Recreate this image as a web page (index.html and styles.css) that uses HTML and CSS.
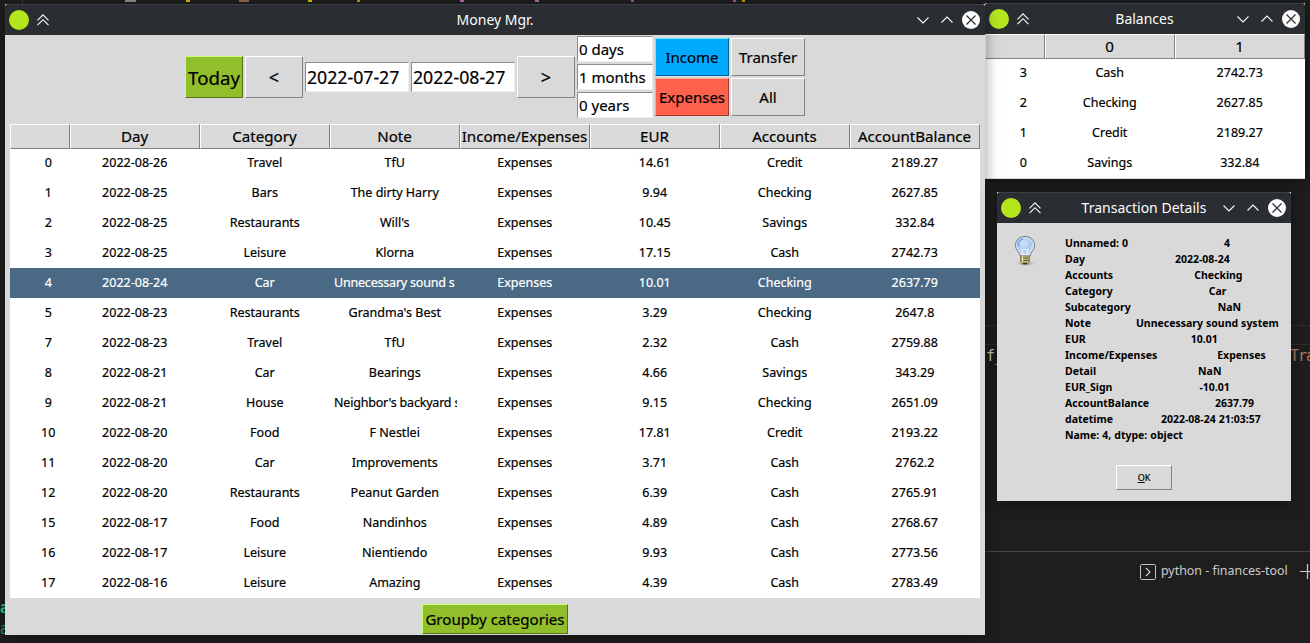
FILE: index.html
```html
<!DOCTYPE html>
<html lang="en">
<head>
<meta charset="utf-8">
<title>Money Mgr.</title>
<link rel="stylesheet" href="styles.css">
</head>
<body>
<svg class="defs" width="0" height="0">
  <symbol id="up2" viewBox="0 0 12 12"><path d="M.5 6.3 6 .8l5.500 5.500M.5 11.200 6 5.700l5.500 5.500" fill="none" stroke="#fcfcfc" stroke-width="1.100"/></symbol>
  <symbol id="down" viewBox="0 0 12 12"><path d="M.5 3.500 6 9l5.500-5.500" fill="none" stroke="#fcfcfc" stroke-width="1.100"/></symbol>
  <symbol id="up" viewBox="0 0 12 12"><path d="M.5 8.500 6 3l5.500 5.500" fill="none" stroke="#fcfcfc" stroke-width="1.100"/></symbol>
  <symbol id="close" viewBox="0 0 18 18"><circle cx="9" cy="9" r="9" fill="#fcfcfc"/><path d="M4.500 4.500l9 9m0-9l-9 9" stroke="#2a2e32" stroke-width="1.200"/></symbol>
</svg>
<div class="desktop">
  <i class="frag guide"></i>
  <i class="frag mark m1"></i><i class="frag mark m2"></i><i class="frag mark m3"></i><i class="frag mark m4"></i><i class="frag mark m5"></i><i class="frag mark m6"></i><i class="frag mark m7"></i><i class="frag mark m8"></i><i class="frag mark m9"></i>
  <i class="frag line l1"></i><i class="frag line l2"></i><i class="frag line l3"></i>
  <span class="frag code c1">f_</span><span class="frag code c2">Tra</span>
  <span class="frag code c3">a</span><span class="frag code c4">a</span>
  <div class="frag terminal">
    <svg width="16" height="16" viewBox="0 0 16 16"><rect x=".5" y=".5" width="15" height="15" rx="1" fill="none" stroke="#c0c4c8"/><path d="M6 4l4 4-4 4" fill="none" stroke="#ccc" stroke-width="1.200"/></svg>
    <span>python - finances-tool</span>
    <svg class="plus" width="15" height="15" viewBox="0 0 15 15"><path d="M0 7.500h15M7.500 0v15" stroke="#ccc" stroke-width="1.200"/></svg>
  </div>

  <section class="window balances">
    <header class="bar"><i class="dot"></i><svg class="ic"><use href="#up2"/></svg><h1>Balances</h1><svg class="ic"><use href="#down"/></svg><svg class="ic"><use href="#up"/></svg><svg class="x"><use href="#close"/></svg></header>
    <div class="table small">
      <div class="row head"><b></b><b>0</b><b>1</b></div>
      <div class="row"><span>3</span><span>Cash</span><span>2742.73</span></div>
      <div class="row"><span>2</span><span>Checking</span><span>2627.85</span></div>
      <div class="row"><span>1</span><span>Credit</span><span>2189.27</span></div>
      <div class="row"><span>0</span><span>Savings</span><span>332.84</span></div>
    </div>
  </section>

  <section class="window main">
    <header class="bar"><i class="dot"></i><svg class="ic"><use href="#up2"/></svg><h1>Money Mgr.</h1><svg class="ic"><use href="#down"/></svg><svg class="ic"><use href="#up"/></svg><svg class="x"><use href="#close"/></svg></header>
    <div class="controls">
      <button class="btn tall green today">Today</button>
      <button class="btn tall">&lt;</button>
      <div class="entry date">2022-07-27</div>
      <div class="entry date">2022-08-27</div>
      <button class="btn tall">&gt;</button>
      <div class="stack"><div class="entry">0 days</div><div class="entry">1 months</div><div class="entry">0 years</div></div>
      <div class="filters"><button class="btn blue">Income</button><button class="btn">Transfer</button><button class="btn red">Expenses</button><button class="btn">All</button></div>
    </div>
    <div class="table big">
      <div class="row head"><b></b><b>Day</b><b>Category</b><b>Note</b><b>Income/Expenses</b><b>EUR</b><b>Accounts</b><b>AccountBalance</b></div>
      <div class="row"><span>0</span><span>2022-08-26</span><span>Travel</span><span>TfU</span><span>Expenses</span><span>14.61</span><span>Credit</span><span>2189.27</span></div>
      <div class="row"><span>1</span><span>2022-08-25</span><span>Bars</span><span>The dirty Harry</span><span>Expenses</span><span>9.94</span><span>Checking</span><span>2627.85</span></div>
      <div class="row"><span>2</span><span>2022-08-25</span><span>Restaurants</span><span>Will's</span><span>Expenses</span><span>10.45</span><span>Savings</span><span>332.84</span></div>
      <div class="row"><span>3</span><span>2022-08-25</span><span>Leisure</span><span>Klorna</span><span>Expenses</span><span>17.15</span><span>Cash</span><span>2742.73</span></div>
      <div class="row selected"><span>4</span><span>2022-08-24</span><span>Car</span><span class="clip">Unnecessary sound s</span><span>Expenses</span><span>10.01</span><span>Checking</span><span>2637.79</span></div>
      <div class="row"><span>5</span><span>2022-08-23</span><span>Restaurants</span><span>Grandma's Best</span><span>Expenses</span><span>3.29</span><span>Checking</span><span>2647.8</span></div>
      <div class="row"><span>7</span><span>2022-08-23</span><span>Travel</span><span>TfU</span><span>Expenses</span><span>2.32</span><span>Cash</span><span>2759.88</span></div>
      <div class="row"><span>8</span><span>2022-08-21</span><span>Car</span><span>Bearings</span><span>Expenses</span><span>4.66</span><span>Savings</span><span>343.29</span></div>
      <div class="row"><span>9</span><span>2022-08-21</span><span>House</span><span class="clip">Neighbor's backyard s</span><span>Expenses</span><span>9.15</span><span>Checking</span><span>2651.09</span></div>
      <div class="row"><span>10</span><span>2022-08-20</span><span>Food</span><span>F Nestlei</span><span>Expenses</span><span>17.81</span><span>Credit</span><span>2193.22</span></div>
      <div class="row"><span>11</span><span>2022-08-20</span><span>Car</span><span>Improvements</span><span>Expenses</span><span>3.71</span><span>Cash</span><span>2762.2</span></div>
      <div class="row"><span>12</span><span>2022-08-20</span><span>Restaurants</span><span>Peanut Garden</span><span>Expenses</span><span>6.39</span><span>Cash</span><span>2765.91</span></div>
      <div class="row"><span>15</span><span>2022-08-17</span><span>Food</span><span>Nandinhos</span><span>Expenses</span><span>4.89</span><span>Cash</span><span>2768.67</span></div>
      <div class="row"><span>16</span><span>2022-08-17</span><span>Leisure</span><span>Nientiendo</span><span>Expenses</span><span>9.93</span><span>Cash</span><span>2773.56</span></div>
      <div class="row"><span>17</span><span>2022-08-16</span><span>Leisure</span><span>Amazing</span><span>Expenses</span><span>4.39</span><span>Cash</span><span>2783.49</span></div>
    </div>
    <button class="btn green group">Groupby categories</button>
  </section>

  <section class="window details">
    <header class="bar"><i class="dot"></i><svg class="ic"><use href="#up2"/></svg><h1>Transaction Details</h1><svg class="ic"><use href="#down"/></svg><svg class="ic"><use href="#up"/></svg><svg class="x"><use href="#close"/></svg></header>
    <div class="message">
      <svg class="bulb" width="24" height="32" viewBox="0 0 24 32">
        <defs>
          <radialGradient id="glass" cx=".45" cy=".35" r=".65"><stop offset="0" stop-color="#d3e4f8"/><stop offset=".55" stop-color="#a9c8ef"/><stop offset="1" stop-color="#d9e2ee"/></radialGradient>
          <radialGradient id="shade"><stop offset="0" stop-color="#777" stop-opacity=".8"/><stop offset="1" stop-color="#999" stop-opacity="0"/></radialGradient>
        </defs>
        <ellipse cx="12.500" cy="28.500" rx="10" ry="2.800" fill="url(#shade)"/>
        <path d="M12 1.500c-5.600 0-9.600 4-9.600 9 0 4.300 4.200 6.500 4.700 10.500h9.800c.5-4 4.700-6.200 4.700-10.500 0-5-4-9-9.600-9z" fill="url(#glass)" stroke="#74798a"/>
        <path d="M12 2.800c-4.800 0-8.300 3.400-8.300 7.700 0 3.600 3.700 5.500 4.500 9.400h7.600c.8-3.900 4.500-5.800 4.500-9.400 0-4.300-3.500-7.700-8.300-7.700z" fill="none" stroke="#f1f5fa" stroke-width=".8"/>
        <path d="M5 11c-.5-4 2-6.500 5-7" fill="none" stroke="#7799dc" stroke-width="1.500"/>
        <path d="M10.500 20l-2-6 2 1 1.500-1 1.500 1 2-1-2 6" fill="none" stroke="#fff" stroke-width=".8"/>
        <path d="M7.500 21h9v5.500l-2 2.500h-5l-2-2.500z" fill="#bcb978" stroke="#77713e" stroke-width=".8"/>
        <path d="M8 23.200h8M8 25.500h8" stroke="#656136"/><path d="M9.500 21.500v5" stroke="#f0edba" stroke-width="1.300"/><path d="M10 28.500h4" stroke="#393823" stroke-width="1.500"/>
      </svg>
<pre>Unnamed: 0                                4
Day                              2022-08-24
Accounts                           Checking
Category                                Car
Subcategory                             NaN
Note               Unnecessary sound system
EUR                                   10.01
Income/Expenses                    Expenses
Detail                                  NaN
EUR_Sign                             -10.01
AccountBalance                      2637.79
datetime                2022-08-24 21:03:57
Name: 4, dtype: object</pre>
    </div>
    <button class="btn ok"><u>O</u>K</button>
  </section>
</div>
</body>
</html>
```
FILE: styles.css
```css
* { box-sizing: border-box; }
body { margin: 0; font-family: "Noto Sans", sans-serif; color: #000; }
.defs { position: absolute; }
.desktop { position: relative; width: 1310px; height: 643px; overflow: hidden; background: #1e1e1e; }

/* editor visible behind the windows */
.frag { position: absolute; }
.guide { left: 22px; top: 0; width: 1px; height: 4px; background: #404040; }
.mark { top: 0; width: 4px; height: 2px; }
.m1 { left: 125px; width: 11px; background: #8c8c8c; }
.m2 { left: 186px; background: #d7b300; }
.m3 { left: 239px; width: 10px; background: #8f6859; }
.m4 { left: 308px; background: #d7b300; }
.m5 { left: 357px; width: 3px; background: #b99a00; }
.m6 { left: 460px; background: #b565b4; }
.m7 { left: 535px; background: #b565b4; }
.m8 { left: 631px; width: 3px; background: #a04e91; }
.m9 { left: 733px; width: 12px; border-left: 3px solid #a04e91; border-right: 3px solid #b99a00; }
.line { left: 985px; right: 0; height: 1px; background: #303030; }
.l1 { top: 325px; }
.l2 { top: 344px; }
.l3 { top: 551px; background: #444; }
.code { font: 15px/20px "DejaVu Sans Mono", monospace; }
.c1 { left: 986px; top: 346px; color: #cfcfb0; }
.c2 { left: 1290px; top: 346px; color: #b57b64; letter-spacing: -1px; }
.c3 { left: 0; top: 598px; color: #23d18b; font-weight: bold; }
.c4 { left: 0; top: 619px; color: #0d9f63; }
.terminal { left: 1140px; top: 561px; display: flex; align-items: center; height: 21px; white-space: nowrap; font-size: 12.4px; color: #ccc; }
.terminal span { margin: -3px 0 0 5px; width: 127px; }
.plus { margin-left: 12px; }

/* window frames */
.window { position: absolute; display: flex; flex-direction: column; background: #d9d9d9; box-shadow: 0 3px 14px rgba(0, 0, 0, .4); }
.main { left: 5px; top: 4px; width: 980px; height: 631px; }
.balances { left: 985px; top: 3px; width: 320px; height: 176px; }
.details { left: 997px; top: 192px; width: 294px; height: 309px; }
.bar { flex: none; display: flex; align-items: center; height: 31px; padding: 0 5px 1px 4px; background: #2a2e32; border-top: 1px solid #3b4045; border-radius: 3px 3px 0 0; color: #fcfcfc; }
.dot { width: 20px; height: 20px; border-radius: 50%; background: #b5e61d; }
.ic { width: 12px; height: 12px; margin: 0 6px; }
.dot + .ic { margin-left: 8px; }
.x { width: 18px; height: 18px; margin-left: 3px; }
.bar h1 { flex: 1; margin: 0; font-size: 14px; line-height: 20px; font-weight: 400; text-align: center; white-space: nowrap; }
.main h1 { padding-left: 24px; }
.balances h1 { padding-left: 23px; }
.details h1 { padding-left: 24px; }

/* bevelled widgets */
.btn, .head b { border: 1px solid; border-color: #fff #828282 #828282 #fff; background: #d9d9d9; }
.btn { display: flex; align-items: center; justify-content: center; margin: 0; padding: 0; border-radius: 0; font-family: inherit; font-size: 15px; color: #000; white-space: nowrap; }
.btn, .entry, .row { -webkit-text-stroke: .2px; }
.green { background: #91bf2c; border-color: #c8ff78 #57731a #57731a #c8ff78; }
.blue { background: #00aaff; border-color: #66eaff #006699 #006699 #66eaff; }
.red { background: #ff614d; border-color: #ffa090 #993a2e #993a2e #ffa090; }
.controls { flex: none; display: flex; align-items: center; justify-content: center; gap: 2px; height: 84px; }
.tall { width: 58px; height: 42px; font-size: 18px; }
.today { font-size: 18.7px; }
.entry { height: 26px; width: 76px; border: 1px solid; border-color: #8d8d8d #ededed #ededed #8d8d8d; background: #fff; padding-left: 1px; font-size: 15px; line-height: 24px; white-space: nowrap; }
.date { width: 104px; height: 30px; font-size: 17.7px; line-height: 28px; }
.stack { display: grid; gap: 2px; }
.filters { display: grid; grid-template-columns: 74px 74px; grid-auto-rows: 38px; gap: 2px; }

/* tables */
.table { background: #fff; }
.big { margin: 5px 5px 0; }
.row { display: grid; grid-template-columns: 60px repeat(7, 130px); height: 30px; font-size: 12.5px; line-height: 29px; text-align: center; }
.small .row { grid-template-columns: 60px repeat(2, 130px); }
.row span { padding-right: .5px; white-space: nowrap; overflow: hidden; }
.row span:first-child { padding-left: 17px; }
.row .clip { margin: 0 3px 0 4px; padding: 0; text-align: left; letter-spacing: -.2px; }
.row.head { height: 24px; font-size: 15.1px; line-height: 23px; }
.head b { padding-right: 1px; font-weight: 400; white-space: nowrap; }
.selected { background: #4a6984; color: #fff; }
.group { width: 146px; height: 30px; margin: 6px auto 0; font-size: 15.1px; }

/* message dialog */
.message { display: flex; padding: 12px 0 0 16px; }
.bulb { flex: none; }
.message pre { margin: 0 0 0 28px; font: bold 10.5px/16px "Noto Sans", sans-serif; word-spacing: .27px; }
.ok { width: 56px; height: 25px; margin: 22px 0 0 119px; font-size: 9px; }
```
